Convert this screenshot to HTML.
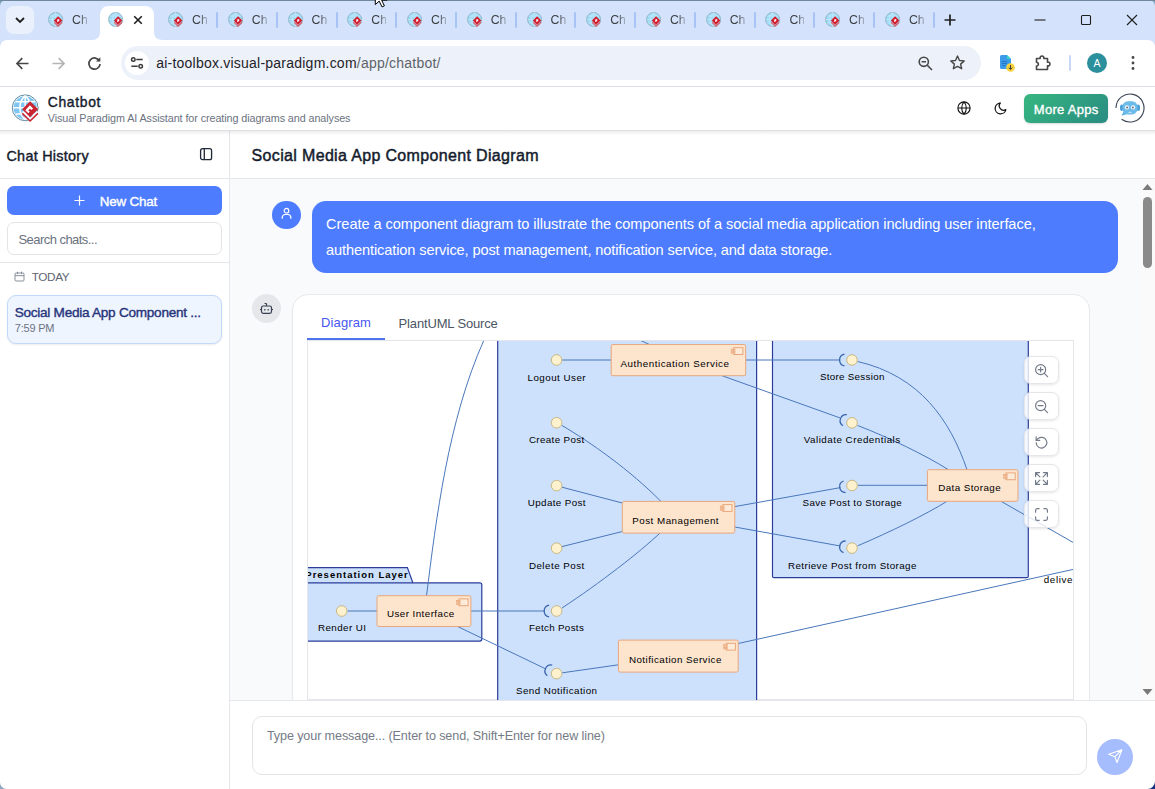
<!DOCTYPE html>
<html><head><meta charset="utf-8">
<style>
*{box-sizing:border-box;margin:0;padding:0}
html,body{width:1155px;height:789px;overflow:hidden;background:#fff;font-family:"Liberation Sans",sans-serif;color:#1f2937}
.abs{position:absolute}
#tabstrip{left:0;top:0;width:1155px;height:40px;background:#d4e2fc;border-radius:6px 6px 0 0}
#tsbg{left:0;top:0;width:1155px;height:12px;background:#7ba3c0}
#winborder{left:0;top:0;width:1155px;height:1px;background:#71889b}
#toolbar{left:0;top:40px;width:1155px;height:46px;background:#fff;border-radius:7px 7px 0 0}
#tbbg{left:0;top:38px;width:1155px;height:12px;background:#d4e2fc}
#tbline{left:0;top:86px;width:1155px;height:1px;background:#dcdfe4}
.tabtxt{top:13px;font-size:12.3px;color:#3c4043;width:15px;overflow:hidden;white-space:nowrap;-webkit-mask-image:linear-gradient(to right,#000 50%,rgba(0,0,0,.3) 100%);mask-image:linear-gradient(to right,#000 50%,rgba(0,0,0,.3) 100%)}
.sep{top:12px;width:2px;height:15.6px;background:#a8c3f5;border-radius:1px}
#omni{left:120.5px;top:46px;width:860px;height:34px;border-radius:17px;background:#edf2fa}
#url{left:157px;top:54px;font-size:14.6px;color:#1f2328;white-space:nowrap;letter-spacing:0.05px}
#apphdr{left:0;top:87px;width:1155px;height:44px;background:#fff;border-bottom:1px solid #dfe1e5}
#hdrshadow{left:0;top:131px;width:1155px;height:4px;background:linear-gradient(rgba(0,0,0,.075),rgba(0,0,0,0))}
#sidebar{left:0;top:131px;width:230px;height:658px;background:#fff;border-right:1px solid #e5e7eb}
#main{left:230px;top:131px;width:925px;height:658px;background:#f9fafb}
#mainhdr{left:230px;top:131px;width:925px;height:48px;background:#fff;border-bottom:1px solid #e5e7eb}

#appname{left:48px;top:94px;font-size:15.5px;font-weight:700;color:#1f2937;letter-spacing:.2px}
#appsub{left:48px;top:111px;font-size:11.2px;color:#6b7280;white-space:nowrap}
#moreapps{left:1024px;top:94px;width:84px;height:29px;border-radius:6px;background:linear-gradient(135deg,#36b67f,#2a8c82);color:#fff;font-weight:700;font-size:13.5px;text-align:center;line-height:29px;letter-spacing:-.3px;box-shadow:0 1px 2px rgba(0,0,0,.15)}
#chathist{left:7px;top:146px;font-size:15px;font-weight:700;color:#1f2937}
#sbline1{left:0;top:178px;width:229px;height:1px;background:#e5e7eb}
#newchat{left:7px;top:186px;width:215px;height:29px;border-radius:7px;background:#4d7cfe;color:#fff;font-size:13.5px;font-weight:700}
#search{left:7px;top:222px;width:215px;height:33px;border-radius:7px;border:1px solid #e2e4e8;background:#fff;font-size:13px;color:#6b7280;padding:8px 0 0 11px}
#sbline2{left:0;top:262px;width:229px;height:1px;background:#e5e7eb}
#today{left:32px;top:271px;font-size:11.5px;color:#5f6673;letter-spacing:.3px}
#chatitem{left:7px;top:295px;width:215px;height:49px;border-radius:9px;border:1px solid #c3d8fb;background:#eff5ff;box-shadow:0 1px 2px rgba(0,0,0,.08)}
#citle{left:15px;top:305px;font-size:13.2px;font-weight:700;color:#27347a;white-space:nowrap}
#ctime{left:15px;top:322px;font-size:11px;color:#6b7280}
#title{left:252px;top:146px;font-size:17px;font-weight:700;color:#1f2937;white-space:nowrap}
#uava{left:272.3px;top:200.8px;width:28.4px;height:28.2px;border-radius:50%;background:#4d7cfe}
#ububble{left:312px;top:201px;width:806px;height:72px;border-radius:14px;background:#4d7cfe;color:#fff;font-size:15px;line-height:26px;padding:10px 0 0 14px;white-space:nowrap}
#bava{left:252px;top:294px;width:29px;height:29px;border-radius:50%;background:#e5e7eb}
#card{left:292px;top:294px;width:798px;height:440px;border-radius:16px;border:1px solid #e8eaee;background:#fff;box-shadow:0 1px 2px rgba(0,0,0,.04)}
#tab1{left:322px;top:315px;font-size:13.5px;color:#4856f0;font-weight:400}
#tab1u{left:307px;top:338px;width:78px;height:2px;z-index:3;background:#4e73f0}
#tab2{left:399px;top:316px;font-size:13.5px;color:#4b5563}
#tabline{left:307px;top:340px;width:767px;height:1px;background:#e3e5e9;z-index:2}
#dia{left:307px;top:340px;width:767px;height:360px;border:1px solid #e5e7eb;border-top:none;background:#fff;overflow:hidden}
#inputbar{left:230px;top:700px;width:925px;height:89px;background:#fff;border-top:1px solid #e5e7eb}
#ta{left:252px;top:716px;width:835px;height:59px;border-radius:10px;border:1px solid #e2e4e8;background:#fff;font-size:12.3px;color:#6b7280;padding:13px 0 0 15px}
#send{left:1097px;top:738.8px;width:36px;height:36px;border-radius:50%;background:#a5bcfd}
#sbtrack{left:1140px;top:179px;width:15px;height:521px;background:#fafafa}
#sbthumb{left:1143px;top:197px;width:9px;height:71px;border-radius:5px;background:#8a8a8a}
.t{white-space:nowrap;line-height:1}
#chathist,#title,#appname{color:#141b2d}
#moreappst,#newchatt,#ul1,#ul2{color:#fff}
#searcht{color:#6b7280}
#tat{color:#757b86}

.zb{left:1024px;width:35px;height:28px;border-radius:7px;background:rgba(255,255,255,.8);border:1px solid #e4e6ea;box-shadow:0 1px 3px rgba(0,0,0,.10)}
.zi{left:1033.5px}
/*FIT*/
#url{left:156.16px;top:56.15px;font-size:14.0px;font-weight:400;letter-spacing:0.229px}
#appname{left:47.77px;top:96.43px;font-size:13.9px;font-weight:400;letter-spacing:0.662px;-webkit-text-stroke:0.39px currentColor}
#appsub{left:47.75px;top:113.26px;font-size:10.8px;font-weight:400;letter-spacing:-0.089px}
#moreappst{left:1033.82px;top:102.90px;font-size:13.0px;font-weight:400;letter-spacing:0.273px;-webkit-text-stroke:0.36px currentColor}
#chathist{left:6.44px;top:148.61px;font-size:14.4px;font-weight:400;letter-spacing:0.271px;-webkit-text-stroke:0.40px currentColor}
#newchatt{left:99.80px;top:194.76px;font-size:13.4px;font-weight:400;letter-spacing:-0.183px;-webkit-text-stroke:0.38px currentColor}
#searcht{left:18.42px;top:233.00px;font-size:13.0px;font-weight:400;letter-spacing:-0.541px}
#today{left:31.69px;top:272.01px;font-size:11.8px;font-weight:400;letter-spacing:-0.396px}
#citle{left:14.68px;top:305.69px;font-size:13.6px;font-weight:400;letter-spacing:-0.269px;-webkit-text-stroke:0.38px currentColor}
#ctime{left:14.84px;top:322.69px;font-size:11.0px;font-weight:400;letter-spacing:-0.210px}
#title{left:251.54px;top:148.46px;font-size:16.0px;font-weight:400;letter-spacing:0.344px;-webkit-text-stroke:0.45px currentColor}
#ul1{left:326.12px;top:216.84px;font-size:14.6px;font-weight:400;letter-spacing:-0.068px}
#ul2{left:326.12px;top:242.84px;font-size:14.6px;font-weight:400;letter-spacing:-0.122px}
#tab1{left:321.12px;top:315.70px;font-size:13.0px;font-weight:400;letter-spacing:0.109px}
#tab2{left:398.62px;top:316.80px;font-size:13.0px;font-weight:400;letter-spacing:-0.160px}
#tat{left:266.94px;top:730.33px;font-size:12.6px;font-weight:400;letter-spacing:-0.112px}
/*ENDFIT*/
</style></head><body>
<div class="abs" id="tsbg"></div>
<div class="abs" id="tabstrip"></div>
<div class="abs" id="tbbg"></div>
<div class="abs" id="winborder"></div>

<svg width="0" height="0" style="position:absolute"><defs>
<g id="fav">
<circle cx="7.6" cy="8.5" r="7" fill="#a0dcf8" stroke="#8aafbd" stroke-width="0.9"/>
<path d="M7.6 1.5v14M0.600 8.500h14M2 5h11M2 12h11M7.600 1.500c-4 3-4 11 0 14M7.600 1.500c4 3 4 11 0 14" stroke="#fff" stroke-width="0.6" opacity=".45" fill="none"/>
<path d="M10.100 5.200l4.300 4.300-4.300 4.300-4.300-4.300z" fill="#d21f30"/>
<path d="M9.300 8.300h1.900v1.700h-.8v1h-1.100z" fill="#fff"/>
<path d="M6.300 11.300l3.800 3.700 3.800-3.700" stroke="#e0525f" stroke-width="1.600" fill="none" opacity=".85"/>
</g>
</defs></svg>
<div class="abs" style="left:6px;top:6px;width:28px;height:28px;border-radius:8px;background:#eaf1fd"></div>
<svg class="abs" style="left:13px;top:14px" width="14" height="12" viewBox="0 0 14 12"><path d="M3 4l4 4 4-4" stroke="#1f1f1f" stroke-width="1.8" fill="none"/></svg>
<!-- active tab -->
<svg class="abs" style="left:92px;top:6px" width="71" height="34" viewBox="0 0 71 34"><path d="M0 34c5 0 8-3 8-8V9c0-5 3-9 9-9h36c6 0 9 4 9 9v17c0 5 3 8 9 8z" fill="#fff"/></svg>
<svg class="abs" style="left:132px;top:14px" width="12" height="12" viewBox="0 0 12 12"><path d="M2.2 2.2l7.6 7.6M9.8 2.2l-7.6 7.6" stroke="#1f1f1f" stroke-width="1.6"/></svg>
<svg class="abs" style="left:48.0px;top:11px" width="18" height="18" viewBox="0 0 18 18"><use href="#fav"/></svg>
<div class="abs tabtxt" style="left:72.0px">Ch</div>
<svg class="abs" style="left:107.9px;top:11px" width="18" height="18" viewBox="0 0 18 18"><use href="#fav"/></svg>
<svg class="abs" style="left:168.1px;top:11px" width="18" height="18" viewBox="0 0 18 18"><use href="#fav"/></svg>
<div class="abs tabtxt" style="left:192.1px">Ch</div>
<div class="abs sep" style="left:216.0px"></div>
<svg class="abs" style="left:227.8px;top:11px" width="18" height="18" viewBox="0 0 18 18"><use href="#fav"/></svg>
<div class="abs tabtxt" style="left:251.8px">Ch</div>
<div class="abs sep" style="left:275.7px"></div>
<svg class="abs" style="left:287.6px;top:11px" width="18" height="18" viewBox="0 0 18 18"><use href="#fav"/></svg>
<div class="abs tabtxt" style="left:311.6px">Ch</div>
<div class="abs sep" style="left:335.5px"></div>
<svg class="abs" style="left:347.3px;top:11px" width="18" height="18" viewBox="0 0 18 18"><use href="#fav"/></svg>
<div class="abs tabtxt" style="left:371.3px">Ch</div>
<div class="abs sep" style="left:395.2px"></div>
<svg class="abs" style="left:407.0px;top:11px" width="18" height="18" viewBox="0 0 18 18"><use href="#fav"/></svg>
<div class="abs tabtxt" style="left:431.0px">Ch</div>
<div class="abs sep" style="left:454.9px"></div>
<svg class="abs" style="left:466.7px;top:11px" width="18" height="18" viewBox="0 0 18 18"><use href="#fav"/></svg>
<div class="abs tabtxt" style="left:490.7px">Ch</div>
<div class="abs sep" style="left:514.6px"></div>
<svg class="abs" style="left:526.5px;top:11px" width="18" height="18" viewBox="0 0 18 18"><use href="#fav"/></svg>
<div class="abs tabtxt" style="left:550.5px">Ch</div>
<div class="abs sep" style="left:574.4px"></div>
<svg class="abs" style="left:586.2px;top:11px" width="18" height="18" viewBox="0 0 18 18"><use href="#fav"/></svg>
<div class="abs tabtxt" style="left:610.2px">Ch</div>
<div class="abs sep" style="left:634.1px"></div>
<svg class="abs" style="left:645.9px;top:11px" width="18" height="18" viewBox="0 0 18 18"><use href="#fav"/></svg>
<div class="abs tabtxt" style="left:669.9px">Ch</div>
<div class="abs sep" style="left:693.8px"></div>
<svg class="abs" style="left:705.7px;top:11px" width="18" height="18" viewBox="0 0 18 18"><use href="#fav"/></svg>
<div class="abs tabtxt" style="left:729.7px">Ch</div>
<div class="abs sep" style="left:753.6px"></div>
<svg class="abs" style="left:765.4px;top:11px" width="18" height="18" viewBox="0 0 18 18"><use href="#fav"/></svg>
<div class="abs tabtxt" style="left:789.4px">Ch</div>
<div class="abs sep" style="left:813.3px"></div>
<svg class="abs" style="left:825.1px;top:11px" width="18" height="18" viewBox="0 0 18 18"><use href="#fav"/></svg>
<div class="abs tabtxt" style="left:849.1px">Ch</div>
<div class="abs sep" style="left:873.0px"></div>
<svg class="abs" style="left:884.9px;top:11px" width="18" height="18" viewBox="0 0 18 18"><use href="#fav"/></svg>
<div class="abs tabtxt" style="left:908.9px">Ch</div>
<div class="abs sep" style="left:932.8px"></div>
<svg class="abs" style="left:943px;top:13px" width="14" height="14" viewBox="0 0 14 14"><path d="M7 1.5v11M1.5 7h11" stroke="#1f1f1f" stroke-width="1.7"/></svg>
<svg class="abs" style="left:1033px;top:13px" width="14" height="14" viewBox="0 0 14 14"><path d="M1.5 7h11" stroke="#1f1f1f" stroke-width="1.1"/></svg>
<svg class="abs" style="left:1079px;top:13px" width="14" height="14" viewBox="0 0 14 14"><rect x="2.5" y="2.5" width="9" height="9" rx="1" stroke="#1f1f1f" stroke-width="1.1" fill="none"/></svg>
<svg class="abs" style="left:1125px;top:13px" width="14" height="14" viewBox="0 0 14 14"><path d="M2 2l10 10M12 2l-10 10" stroke="#1f1f1f" stroke-width="1.1"/></svg>
<div class="abs" id="toolbar"></div>
<div class="abs" id="tbline"></div>
<div class="abs" id="omni"></div>
<div class="abs t" id="url">ai-toolbox.visual-paradigm.com<span style="color:#5f6368">/app/chatbot/</span></div>

<!-- nav icons -->
<svg class="abs" style="left:14px;top:54.6px" width="17" height="17" viewBox="0 0 17 17"><path d="M14.5 8.5h-11M8.3 3.2L3 8.5l5.3 5.3" stroke="#474747" stroke-width="1.7" fill="none"/></svg>
<svg class="abs" style="left:49.500px;top:54.600px" width="17" height="17" viewBox="0 0 17 17"><path d="M2.5 8.5h11M8.7 3.2L14 8.5l-5.3 5.3" stroke="#b4b4b4" stroke-width="1.7" fill="none"/></svg>
<svg class="abs" style="left:85.500px;top:54.800px" width="17" height="17" viewBox="0 0 17 17"><path d="M13.6 6.2A5.6 5.6 0 1 0 14.1 9" stroke="#474747" stroke-width="1.7" fill="none"/><path d="M14.3 2.2v4.4H9.9z" fill="#474747"/></svg>
<div class="abs" style="left:125px;top:51px;width:24px;height:24px;border-radius:12px;background:#fff"></div>
<svg class="abs" style="left:130px;top:56.200px" width="14" height="14" viewBox="0 0 14 14"><path d="M6.300 3.500h6.400M1.300 10.300h6.400" stroke="#3c3c3c" stroke-width="1.600"/><circle cx="3.300" cy="3.500" r="1.750" stroke="#3c3c3c" stroke-width="1.500" fill="none"/><circle cx="10.700" cy="10.300" r="1.750" stroke="#3c3c3c" stroke-width="1.500" fill="none"/></svg>
<!-- right icons -->
<svg class="abs" style="left:916.5px;top:54.5px" width="17" height="17" viewBox="0 0 17 17"><circle cx="6.8" cy="6.8" r="4.6" stroke="#474747" stroke-width="1.6" fill="none"/><path d="M10.3 10.3l4.7 4.7M4.6 6.8h4.4" stroke="#474747" stroke-width="1.6"/></svg>
<svg class="abs" style="left:948.5px;top:53.8px" width="17" height="17" viewBox="0 0 18 18"><path d="M9 2.2l2.1 4.6 5 .5-3.8 3.4 1.1 4.9L9 13.1l-4.4 2.5 1.1-4.9L1.9 7.3l5-.5z" stroke="#474747" stroke-width="1.5" fill="none" stroke-linejoin="round"/></svg>
<svg class="abs" style="left:997px;top:52.5px" width="20" height="20" viewBox="0 0 20 20"><path d="M3 3.5A1.5 1.5 0 0 1 4.500 2H10l4 4v8.500A1.500 1.500 0 0 1 12.500 16H4.500A1.500 1.500 0 0 1 3 14.500z" fill="#3b9be8"/><path d="M10 2l4 4h-4z" fill="#36d6c5"/><path d="M5 8.500h5M5 10.500h5M5 12.500h3.500" stroke="#1f6fc0" stroke-width="0.9"/><circle cx="13.500" cy="14.500" r="4.300" fill="#f7d23c"/><path d="M13.500 12v4.300M11.700 14.600l1.800 1.800 1.800-1.800" stroke="#3c3c3c" stroke-width="1" fill="none"/></svg>
<svg class="abs" style="left:1033.3px;top:52.5px" width="20" height="20" viewBox="0 0 20 20"><path d="M3.500 5.500h3.700a1.900 1.900 0 1 1 3.600 0h3.700v3.700a1.900 1.900 0 1 1 0 3.600v3.700h-11v-3.400a1.900 1.900 0 1 0 0-3.800z" stroke="#474747" stroke-width="1.6" fill="none" stroke-linejoin="round"/></svg>
<div class="abs" style="left:1069px;top:55px;width:2px;height:16px;background:#c9d8f5;border-radius:1px"></div>
<div class="abs" style="left:1087px;top:52.7px;width:20px;height:20px;border-radius:10px;background:#2c8f9c;color:#fff;font-size:10.5px;text-align:center;line-height:20.5px">A</div>
<svg class="abs" style="left:1129px;top:53.6px" width="8" height="18" viewBox="0 0 8 18"><circle cx="4" cy="3.500" r="1.400" fill="#474747"/><circle cx="4" cy="9" r="1.400" fill="#474747"/><circle cx="4" cy="14.500" r="1.400" fill="#474747"/></svg>
<div class="abs" id="apphdr"></div>
<div class="abs" id="sidebar"></div>
<div class="abs" id="main"></div>
<div class="abs" id="mainhdr"></div>

<!-- app header content -->
<svg class="abs" style="left:11px;top:93px" width="30" height="30" viewBox="0 0 30 30">
<circle cx="14.200" cy="14.800" r="12.900" fill="#fff" stroke="#5f8b9f" stroke-width="1"/>
<circle cx="14.200" cy="14.800" r="11.600" fill="#7fc6f3"/>
<path d="M14.200 3v23.600M2.400 14.800h23.600M4.500 8.700h19.400M4.500 20.900h19.400M14.200 3c-7 4.600-7 19 0 23.600M14.200 3c7 4.600 7 19 0 23.600" stroke="#fff" stroke-width="1.500" fill="none"/>
<path d="M19.100 8.300l8 8-8 8-8-8z" fill="#c9242f"/>
<path d="M18.900 12.200l3.200 3.200-1.700 1.700-1.400-1.400-1.600 1.600 1.400 1.400-1.500 1.500-3-3z" fill="#fff"/>
<path d="M11.600 18.600l7.500 7.400 7.500-7.400" stroke="#fff" stroke-width="1.700" fill="none"/>
<path d="M11.300 20.400l7.800 7.600 7.800-7.600" stroke="#c9242f" stroke-width="1.500" fill="none"/>
</svg>
<div class="abs t" id="appname">Chatbot</div>
<div class="abs t" id="appsub">Visual Paradigm AI Assistant for creating diagrams and analyses</div>
<svg class="abs" style="left:956.2px;top:100.1px" width="16" height="16" viewBox="0 0 16 16"><circle cx="8" cy="8" r="6.100" stroke="#111" stroke-width="1.150" fill="none"/><path d="M1.900 8h12.200M8 1.900c-3.100 3.300-3.100 8.900 0 12.200M8 1.900c3.100 3.300 3.100 8.900 0 12.200" stroke="#111" stroke-width="1.100" fill="none"/></svg>
<svg class="abs" style="left:992.6px;top:100.8px" width="14.7" height="14.7" viewBox="0 0 16 16"><path d="M8 2.200a5.900 5.900 0 1 0 6 7.100A4.700 4.700 0 0 1 8 2.200z" stroke="#111" stroke-width="1.350" fill="none" stroke-linejoin="round"/></svg>
<div class="abs" id="moreapps"></div><div class="abs t" id="moreappst">More Apps</div>
<svg class="abs" style="left:1114.65px;top:93.3px" width="30" height="30" viewBox="0 0 30 30"><path d="M1 14.500A14 14 0 1 1 6.970 26.470" stroke="#3d4757" stroke-width="1.150" fill="none" stroke-linecap="round"/>
<ellipse cx="6.700" cy="14.800" rx="1.700" ry="3.300" fill="#4e9fd8"/><ellipse cx="23.300" cy="14.800" rx="1.700" ry="3.300" fill="#4e9fd8"/>
<path d="M8.600 18.500L6.500 22.700 12.500 21z" fill="#5fb0e3"/>
<rect x="7.500" y="8.200" width="15" height="13.200" rx="5.500" fill="#6cbbe9"/>
<circle cx="11.950" cy="14.400" r="2.150" fill="#f4f9fd"/><circle cx="18.050" cy="14.400" r="2.150" fill="#f4f9fd"/><circle cx="12.100" cy="14.500" r="1" fill="#66727f"/><circle cx="17.900" cy="14.500" r="1" fill="#66727f"/>
<ellipse cx="15" cy="19.300" rx="1.700" ry=".65" fill="#d4ecfa"/>
</svg>
<!-- sidebar -->
<div class="abs t" id="chathist">Chat History</div>
<svg class="abs" style="left:199.3px;top:147.2px" width="14.2" height="14.2" viewBox="0 0 15 15"><rect x="1.700" y="1.700" width="11.600" height="11.600" rx="2" stroke="#1f2937" stroke-width="1.400" fill="none"/><path d="M5.600 1.700v11.600" stroke="#1f2937" stroke-width="1.400"/></svg>
<div class="abs" id="sbline1"></div>
<div class="abs" id="newchat"></div><div class="abs t" id="newchatt">New Chat</div>
<svg class="abs" style="left:74px;top:195px" width="11" height="11" viewBox="0 0 11 11"><path d="M5.500 0.500v10M0.500 5.500h10" stroke="#fff" stroke-width="1.200"/></svg>
<div class="abs" id="search"></div><div class="abs t" id="searcht">Search chats...</div>
<div class="abs" id="sbline2"></div>
<svg class="abs" style="left:14px;top:271px" width="11" height="11" viewBox="0 0 11 11"><rect x="1" y="2" width="9" height="8" rx="1" stroke="#8a909b" stroke-width="1" fill="none"/><path d="M1 4.700h9M3.500 0.700v2.400M7.500 0.700v2.400" stroke="#8a909b" stroke-width="1"/></svg>
<div class="abs t" id="today">TODAY</div>
<div class="abs" id="chatitem"></div>
<div class="abs t" id="citle">Social Media App Component ...</div>
<div class="abs t" id="ctime">7:59 PM</div>
<!-- main -->
<div class="abs t" id="title">Social Media App Component Diagram</div>
<div class="abs" id="uava"></div>
<svg class="abs" style="left:279px;top:206px" width="15" height="15" viewBox="0 0 15 15"><circle cx="7.500" cy="4.700" r="2.300" stroke="#fff" stroke-width="1.200" fill="none"/><path d="M3.200 12.800v-1.300a3 3 0 0 1 3-3h2.600a3 3 0 0 1 3 3v1.300" stroke="#fff" stroke-width="1.200" fill="none"/></svg>
<div class="abs" id="ububble"></div><div class="abs t" id="ul1">Create a component diagram to illustrate the components of a social media application including user interface,</div><div class="abs t" id="ul2">authentication service, post management, notification service, and data storage.</div>
<div class="abs" id="bava"></div>
<svg class="abs" style="left:259px;top:301px" width="15" height="15" viewBox="0 0 15 15"><rect x="2.500" y="5" width="10" height="7.300" rx="1.800" stroke="#374151" stroke-width="1.200" fill="none"/><path d="M7.500 5V2.500M5.500 2.500h2M1 8.500h1.500M12.500 8.500H14M5.800 8v1.500M9.200 8v1.500" stroke="#374151" stroke-width="1.200" fill="none"/></svg>
<div class="abs" id="card"></div>
<div class="abs t" id="tab1">Diagram</div>
<div class="abs t" id="tab2">PlantUML Source</div>
<div class="abs" id="tabline"></div>
<div class="abs" id="tab1u"></div>
<div class="abs" id="dia"></div>
<!--DIA-->
<svg class="abs" id="diasvg" style="left:308px;top:340px" width="765" height="360" viewBox="308 340 765 360">
<g fill="#cde1fd" stroke="#2b3d9b" stroke-width="1.2">
<rect x="497.7" y="300" width="258.9" height="450"/>
<rect x="772.5" y="300" width="255.8" height="277.7" rx="1.5"/>
<path d="M290 583V567.6H407.4L412.9 583"/>
<rect x="290" y="582.9" width="191.8" height="58.2" rx="2"/>
</g>
<g fill="none" stroke="#4a77ba" stroke-width="1">
<path d="M426.5 596C436 520 448 420 484 340"/>
<path d="M640.2 340.3L649.2 344.4"/>
<path d="M562.2 360H611.2"/>
<path d="M745.7 360H840.2"/>
<path d="M722 375.7L840.3 418"/>
<path d="M562 425.5C590 442 630 470 661 501.5"/>
<path d="M562 487.2L622.3 503"/>
<path d="M562 546.6L622.3 531.5"/>
<path d="M660 533C640 552 600 583 562 608"/>
<path d="M734.8 506.6L840.4 487.6"/>
<path d="M734.8 527L840.4 546"/>
<path d="M347.5 611H377"/>
<path d="M471 611H544.2"/>
<path d="M457.6 626.5L545.5 668.8"/>
<path d="M562.3 672.8L618.4 664.8"/>
<path d="M738.2 643.5L1075 569"/>
<path d="M857.7 361.5C920 376 950 420 967 469.7"/>
<path d="M857.7 425.5C890 438 925 455 948.4 469.7"/>
<path d="M858 485.3H927.4"/>
<path d="M857.7 545.8C890 532 925 515 947 501.3"/>
<path d="M1001 501.3L1075 543.5"/>
</g>
<g fill="none" stroke="#3a66ab" stroke-width="1.3">
<path d="M549.1 605.1A6.0 6.0 0 0 0 549.1 616.9"/>
<path d="M552.2 665.1A6.0 6.0 0 0 0 547.3 675.7"/>
<path d="M844.5 354.1A6.0 6.0 0 0 0 844.5 365.9"/>
<path d="M846.9 414.7A6.0 6.0 0 0 0 842.9 425.7"/>
<path d="M843.5 481.0A6.0 6.0 0 0 0 845.6 492.6"/>
<path d="M845.6 541.0A6.0 6.0 0 0 0 843.5 552.6"/>
</g>
<g fill="#fdf1ce" stroke="#c4b278" stroke-width="0.9">
<circle cx="556.6" cy="360" r="5.3"/>
<circle cx="556.6" cy="422.7" r="5.3"/>
<circle cx="556.6" cy="485.6" r="5.3"/>
<circle cx="556.6" cy="548.2" r="5.3"/>
<circle cx="556.6" cy="611" r="5.3"/>
<circle cx="556.6" cy="673.6" r="5.3"/>
<circle cx="341.7" cy="611" r="5.3"/>
<circle cx="852" cy="360" r="5.3"/>
<circle cx="852" cy="422.8" r="5.3"/>
<circle cx="852" cy="485.5" r="5.3"/>
<circle cx="852" cy="548.1" r="5.3"/>
</g>
<rect x="611.2" y="344.5" width="134.5" height="31.2" rx="1.8" fill="#fce4cd" stroke="#e8a77c" stroke-width="1"/><rect x="733.7" y="347.7" width="9.2" height="6.8" fill="#fdebd9" stroke="#e8a77c" stroke-width="1"/><rect x="731.1" y="349.1" width="4" height="1.6" fill="#f3b892" stroke="#e8a77c" stroke-width=".5"/><rect x="731.1" y="351.7" width="4" height="1.6" fill="#f3b892" stroke="#e8a77c" stroke-width=".5"/>
<rect x="622.3" y="501.4" width="112.5" height="31.7" rx="1.8" fill="#fce4cd" stroke="#e8a77c" stroke-width="1"/><rect x="722.8" y="504.6" width="9.2" height="6.8" fill="#fdebd9" stroke="#e8a77c" stroke-width="1"/><rect x="720.2" y="506.0" width="4" height="1.6" fill="#f3b892" stroke="#e8a77c" stroke-width=".5"/><rect x="720.2" y="508.6" width="4" height="1.6" fill="#f3b892" stroke="#e8a77c" stroke-width=".5"/>
<rect x="618.4" y="640.1" width="119.8" height="32.0" rx="1.8" fill="#fce4cd" stroke="#e8a77c" stroke-width="1"/><rect x="726.2" y="643.3" width="9.2" height="6.8" fill="#fdebd9" stroke="#e8a77c" stroke-width="1"/><rect x="723.6" y="644.7" width="4" height="1.6" fill="#f3b892" stroke="#e8a77c" stroke-width=".5"/><rect x="723.6" y="647.3" width="4" height="1.6" fill="#f3b892" stroke="#e8a77c" stroke-width=".5"/>
<rect x="377" y="595.7" width="93.9" height="30.8" rx="1.8" fill="#fce4cd" stroke="#e8a77c" stroke-width="1"/><rect x="458.9" y="598.9" width="9.2" height="6.8" fill="#fdebd9" stroke="#e8a77c" stroke-width="1"/><rect x="456.3" y="600.3" width="4" height="1.6" fill="#f3b892" stroke="#e8a77c" stroke-width=".5"/><rect x="456.3" y="602.9" width="4" height="1.6" fill="#f3b892" stroke="#e8a77c" stroke-width=".5"/>
<rect x="927.4" y="469.7" width="90.6" height="31.6" rx="1.8" fill="#fce4cd" stroke="#e8a77c" stroke-width="1"/><rect x="1006.0" y="472.9" width="9.2" height="6.8" fill="#fdebd9" stroke="#e8a77c" stroke-width="1"/><rect x="1003.4" y="474.3" width="4" height="1.6" fill="#f3b892" stroke="#e8a77c" stroke-width=".5"/><rect x="1003.4" y="476.9" width="4" height="1.6" fill="#f3b892" stroke="#e8a77c" stroke-width=".5"/>
<g font-family="Liberation Sans, sans-serif" font-size="9.8" fill="#000">
<text x="527.5" y="380.5" textLength="58.1" lengthAdjust="spacing">Logout User</text>
<text x="528.9" y="442.9" textLength="55.4" lengthAdjust="spacing">Create Post</text>
<text x="527.8" y="506.0" textLength="57.8" lengthAdjust="spacing">Update Post</text>
<text x="528.9" y="568.9" textLength="55.4" lengthAdjust="spacing">Delete Post</text>
<text x="528.9" y="630.7" textLength="54.9" lengthAdjust="spacing">Fetch Posts</text>
<text x="515.9" y="694.1" textLength="81.1" lengthAdjust="spacing">Send Notification</text>
<text x="318.0" y="631.0" textLength="47.9" lengthAdjust="spacing">Render UI</text>
<text x="819.9" y="380.3" textLength="64.5" lengthAdjust="spacing">Store Session</text>
<text x="803.7" y="443.3" textLength="96.5" lengthAdjust="spacing">Validate Credentials</text>
<text x="802.5" y="505.9" textLength="99.2" lengthAdjust="spacing">Save Post to Storage</text>
<text x="788.0" y="568.8" textLength="128.4" lengthAdjust="spacing">Retrieve Post from Storage</text>
<text x="620.5" y="366.9" textLength="108.5" lengthAdjust="spacing">Authentication Service</text>
<text x="632.2" y="523.5" textLength="86.4" lengthAdjust="spacing">Post Management</text>
<text x="628.9" y="662.5" textLength="92.5" lengthAdjust="spacing">Notification Service</text>
<text x="386.9" y="617.4" textLength="67.3" lengthAdjust="spacing">User Interface</text>
<text x="938.2" y="491.4" textLength="62.4" lengthAdjust="spacing">Data Storage</text>
<text x="305.3" y="578" font-weight="700" font-size="9.5" textLength="102.5" lengthAdjust="spacing">Presentation Layer</text>
<text x="1043.8" y="582.5" textLength="28.6" lengthAdjust="spacing">delive</text>
</g>
</svg>
<!--ENDDIA-->
<!--ZB-->
<div class="abs zb" style="top:356px"></div>
<svg class="abs zi" style="top:362.5px" width="15" height="15" viewBox="0 0 14 14" fill="none" stroke="#737a88" stroke-width="1.1" stroke-linecap="round" stroke-linejoin="round"><circle cx="6.2" cy="6.2" r="4.7"/><path d="M9.700 9.700l3 3M4 6.200h4.400M6.200 4v4.400"/></svg>
<div class="abs zb" style="top:392px"></div>
<svg class="abs zi" style="top:398.5px" width="15" height="15" viewBox="0 0 14 14" fill="none" stroke="#737a88" stroke-width="1.1" stroke-linecap="round" stroke-linejoin="round"><circle cx="6.200" cy="6.200" r="4.700"/><path d="M9.700 9.700l3 3M4 6.200h4.400"/></svg>
<div class="abs zb" style="top:428px"></div>
<svg class="abs zi" style="top:434.5px" width="15" height="15" viewBox="0 0 14 14" fill="none" stroke="#737a88" stroke-width="1.1" stroke-linecap="round" stroke-linejoin="round"><path d="M2 7.200a5 5 0 1 0 1.700-3.800L2 5"/><path d="M2 1.600V5h3.400"/></svg>
<div class="abs zb" style="top:464px"></div>
<svg class="abs zi" style="top:470.5px" width="15" height="15" viewBox="0 0 14 14" fill="none" stroke="#737a88" stroke-width="1.1" stroke-linecap="round" stroke-linejoin="round"><path d="M8.800 1.500h3.700v3.700M12.500 1.500L8.500 5.500M5.200 12.500H1.500V8.800M1.500 12.500l4-4M1.500 5.200V1.500h3.700M1.500 1.500l4 4M12.500 8.800v3.700H8.800M12.500 12.500l-4-4"/></svg>
<div class="abs zb" style="top:500px"></div>
<svg class="abs zi" style="top:506.5px" width="15" height="15" viewBox="0 0 14 14" fill="none" stroke="#737a88" stroke-width="1.1" stroke-linecap="round" stroke-linejoin="round"><path d="M1.500 4.800V3a1.500 1.500 0 0 1 1.500-1.500h1.800M9.200 1.500H11A1.500 1.500 0 0 1 12.500 3v1.800M12.500 9.200V11a1.500 1.500 0 0 1-1.500 1.500H9.200M4.800 12.500H3A1.500 1.500 0 0 1 1.500 11V9.200"/></svg>
<!--ENDZB-->
<div class="abs" id="inputbar"></div>
<div class="abs" id="ta"></div><div class="abs t" id="tat">Type your message... (Enter to send, Shift+Enter for new line)</div>
<div class="abs" id="send"></div>
<svg class="abs" style="left:1107px;top:748px" width="17" height="17" viewBox="1107 748 17 17"><path d="M1121.900 749.700L1108.700 754.200 1114.800 756.800 1117 762.500zM1121.900 749.700L1114.800 756.800" stroke="#fff" stroke-width="1.100" fill="none" stroke-linejoin="round"/></svg>
<div class="abs" id="sbtrack"></div>
<div class="abs" id="sbthumb"></div>
<svg class="abs" style="left:1142px;top:183px" width="11" height="8" viewBox="0 0 11 8"><path d="M5.500 1l5 6h-10z" fill="#7a7a7a"/></svg>
<svg class="abs" style="left:1142px;top:688px" width="11" height="8" viewBox="0 0 11 8"><path d="M5.500 7l5-6h-10z" fill="#7a7a7a"/></svg>
<svg class="abs" style="left:370px;top:0" width="22" height="10" viewBox="370 0 22 10"><path d="M375.300 -12.300V4.600L379.200 1.100 382 6.900 384.400 5.900 381.700 0.200H387z" fill="#fff" stroke="#000" stroke-width="1" stroke-linejoin="round"/></svg>
<svg class="abs" style="left:1145px;top:779px" width="10" height="10" viewBox="0 0 10 10"><path d="M10 2.500A7.500 7.500 0 0 1 2.500 10H10z" fill="#12307d"/></svg>
<svg class="abs" style="left:0;top:781px" width="8" height="8" viewBox="0 0 8 8"><path d="M0 1.500A6.500 6.500 0 0 0 6.500 8H0z" fill="#8fa5c0"/></svg>
<div class="abs" id="hdrshadow"></div>
</body></html>
